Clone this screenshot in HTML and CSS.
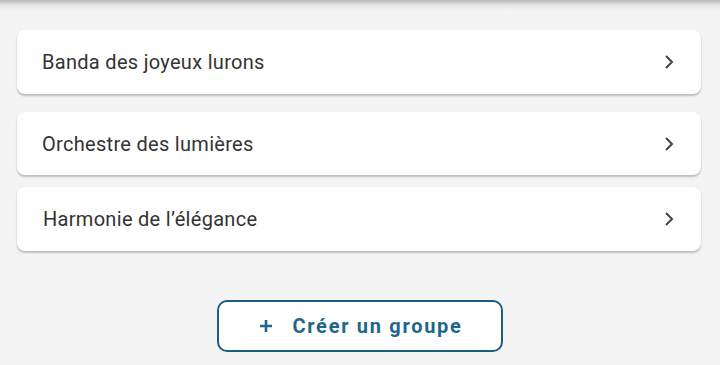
FILE: index.html
```html
<!DOCTYPE html>
<html lang="fr">
<head>
<meta charset="utf-8">
<link rel="stylesheet" href="styles.css">
</head>
<body>
<div class="topshadow"></div>
<main class="list">
  <a class="card card-first" href="#"><span class="label">Banda des joyeux lurons</span><svg class="chev" width="10" height="16" viewBox="0 0 10 16"><path d="M2 2 L8 8 L2 14" fill="none" stroke="#444" stroke-width="2"/></svg></a>
  <a class="card card-second" href="#"><span class="label">Orchestre des lumières</span><svg class="chev" width="10" height="16" viewBox="0 0 10 16"><path d="M2 2 L8 8 L2 14" fill="none" stroke="#444" stroke-width="2"/></svg></a>
  <a class="card card-third" href="#"><span class="label label-shift">Harmonie de l’élégance</span><svg class="chev" width="10" height="16" viewBox="0 0 10 16"><path d="M2 2 L8 8 L2 14" fill="none" stroke="#444" stroke-width="2"/></svg></a>
</main>
<div class="actions">
  <button class="create"><svg class="plus" width="14" height="14" viewBox="0 0 14 14"><path d="M7 1 V13 M1 7 H13" stroke="#1e6788" stroke-width="2.6"/></svg><span>Créer un groupe</span></button>
</div>
</body>
</html>
```
FILE: styles.css
```css
* { box-sizing: border-box; }
html, body { margin: 0; padding: 0; }
body {
  background: #f4f4f4;
  font-family: Roboto, "Noto Sans", sans-serif;
  width: 720px;
  height: 365px;
  overflow: hidden;
}
.topshadow {
  height: 12px;
  background: linear-gradient(#b9b9b9, #e6e6e6 45%, #f2f2f2 80%, #f4f4f4);
}
.list {
  display: flex;
  flex-direction: column;
  padding: 18px 19px 0 17px;
}
.card {
  display: flex;
  align-items: center;
  justify-content: space-between;
  height: 64px;
  padding: 0 27px 0 25px;
  background: #fff;
  border-radius: 8px;
  box-shadow: 0 2px 2px rgba(0,0,0,0.22), 0 0 2px rgba(0,0,0,0.06);
  text-decoration: none;
  color: #333;
}
.card-second { margin-top: 18px; height: 63px; }
.card-third { margin-top: 12px; }
.label {
  font-size: 20px;
  color: #333;
  letter-spacing: 0.3px;
}
.label-shift { margin-left: 1px; }
.chev { display: block; }
.actions {
  display: flex;
  justify-content: center;
  padding-top: 49px;
}
.create {
  display: flex;
  align-items: center;
  justify-content: center;
  gap: 20px;
  width: 286px;
  height: 52px;
  margin-left: -1px;
  background: #fff;
  border: 2px solid #1b5e7f;
  border-radius: 10px;
  color: #1e6788;
  font-family: Roboto, "Noto Sans", sans-serif;
  font-weight: 700;
  font-size: 20px;
  letter-spacing: 1.7px;
  padding: 0 0 1px 2px;
}
.plus { display: block; }
```
